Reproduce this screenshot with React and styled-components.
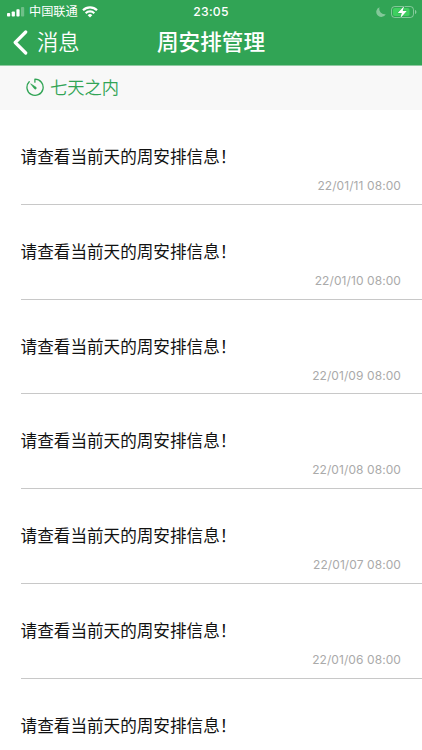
import React from 'react'
import styled, { createGlobalStyle } from 'styled-components';

const messages = [
  { id: 1, text: '请查看当前天的周安排信息！', time: '22/01/11 08:00' },
  { id: 2, text: '请查看当前天的周安排信息！', time: '22/01/10 08:00' },
  { id: 3, text: '请查看当前天的周安排信息！', time: '22/01/09 08:00' },
  { id: 4, text: '请查看当前天的周安排信息！', time: '22/01/08 08:00' },
  { id: 5, text: '请查看当前天的周安排信息！', time: '22/01/07 08:00' },
  { id: 6, text: '请查看当前天的周安排信息！', time: '22/01/06 08:00' },
  { id: 7, text: '请查看当前天的周安排信息！' },
];

const SignalIcon = () => (
  <svg width="18" height="10" viewBox="0 0 18 10" fill="#fff">
    <rect x="0" y="6" width="3.2" height="3.6" rx="0.8" />
    <rect x="4.7" y="4.4" width="3.2" height="5.2" rx="0.8" />
    <rect x="9.4" y="2.3" width="3.2" height="7.3" rx="0.8" />
    <rect x="14" y="0" width="3.2" height="9.6" rx="0.8" opacity="0.3" />
  </svg>
)

const WifiIcon = () => (
  <svg width="16" height="12" viewBox="0 0 16 12" fill="none" stroke="#fff" strokeWidth="2.2">
    <path d="M1 4.3a10 10 0 0 1 14 0" />
    <path d="M3.7 7.2a6.1 6.1 0 0 1 8.6 0" />
    <path d="M8 11.5 5.7 9.2a3.3 3.3 0 0 1 4.6 0z" fill="#fff" stroke="none" />
  </svg>
)

const MoonIcon = () => (
  <svg width="10" height="10" viewBox="0 0 10 10" fill="#fff" opacity="0.4">
    <path d="M3.6.2A5 5 0 1 0 9.8 7 5.2 5.2 0 0 1 3.6.2z" />
  </svg>
)

const BatteryIcon = () => (
  <svg width="26" height="12" viewBox="0 0 26 12">
    <rect x="0.5" y="0.5" width="22" height="11" rx="3.2" fill="none" stroke="#fff" opacity="0.4" />
    <rect x="2" y="2" width="16.5" height="8" rx="1.8" fill="#3fd060" />
    <path d="M24 4v4c.9-.3 1.4-1.1 1.4-2s-.5-1.7-1.4-2z" fill="#fff" opacity="0.45" />
    <path d="M13.2 0 6.7 6.9h4.1L9.4 12l6.4-7h-4.100z" fill="#fff" stroke="#31a455" strokeWidth="0.8" paintOrder="stroke" />
  </svg>
)

const BackIcon = () => (
  <svg width="15" height="25" viewBox="0 0 15 25" fill="none" stroke="#fff" strokeWidth="3.2" strokeLinecap="round" strokeLinejoin="round">
    <path d="M12.7 2 2.2 12.5l10.5 10.5" />
  </svg>
)

const TimerIcon = () => (
  <svg width="18" height="19" viewBox="0 0 18 19" fill="none" stroke="#31a455" strokeWidth="1.3" strokeLinecap="round" strokeLinejoin="round">
    <path d="M8.900 4.200V1.200A8.100 8.100 0 1 1 3.200 3.700" />
    <path d="m5 6 5 3.300a1 1 0 1 1-1.500 1.500z" fill="#31a455" strokeWidth="0.7" />
  </svg>
)

const App = () => {
  return (
    <>
      <GlobalStyle />
      <Screen>
        <Header>
          <StatusBar>
            <Carrier>
              <SignalIcon />
              <span>中国联通</span>
              <WifiIcon />
            </Carrier>
            <Clock>23:05</Clock>
            <Power>
              <MoonIcon />
              <BatteryIcon />
            </Power>
          </StatusBar>
          <NavBar>
            <Back>
              <BackIcon />
              <span>消息</span>
            </Back>
            <Title>周安排管理</Title>
          </NavBar>
        </Header>
        <Filter>
          <TimerIcon />
          <span>七天之内</span>
        </Filter>
        <List>
          {messages.map((message) => {
            const { id, text, time } = message;
            return (
              <Row key={id}>
                <Message>{text}</Message>
                {time && <Time>{time}</Time>}
              </Row>
            )
          })}
        </List>
      </Screen>
    </>
  )
}

const GlobalStyle = createGlobalStyle`
  * {
    box-sizing: border-box;
  }
  body {
    margin: 0;
    background: #fff;
    font-family: Inter, 'Noto Sans CJK SC', sans-serif;
  }
  svg {
    display: block;
    flex: none;
  }
`

const Screen = styled.div`
  display: flex;
  flex-direction: column;
  height: 750px;
  overflow: hidden;
  background: #fff;
`

const Header = styled.header`
  flex: none;
  height: 66px;
  background: #31a455;
  border-bottom: 1px solid #8fc9a1;
  color: #fff;
`

const StatusBar = styled.div`
  display: grid;
  grid-template-columns: 1fr auto 1fr;
  align-items: center;
  height: 22px;
  padding: 0 5px 0 7px;
`

const Carrier = styled.div`
  display: flex;
  align-items: center;
  gap: 4px;
  font-size: 12.2px;
  line-height: 22px;

  span {
    padding-top: 1px;
  }
`

const Clock = styled.div`
  margin-right: 2px;
  font-size: 12.2px;
  font-weight: 500;
  letter-spacing: 0.3px;
  line-height: 22px;
`

const Power = styled.div`
  display: flex;
  align-items: center;
  justify-content: flex-end;
  gap: 5px;
`

const NavBar = styled.div`
  display: grid;
  grid-template-columns: 1fr auto 1fr;
  align-items: center;
  height: 40px;
`

const Back = styled.div`
  display: flex;
  align-items: center;
  gap: 9px;
  padding-left: 13px;
  font-size: 21.3px;
  font-weight: 350;
  line-height: 38px;
`

const Title = styled.h1`
  margin: 0;
  font-size: 21.6px;
  font-weight: 500;
  line-height: 38px;
`

const Filter = styled.div`
  display: flex;
  flex: none;
  align-items: center;
  gap: 6px;
  height: 44px;
  padding: 0 0 1px 26px;
  background: #f8f8f8;
  color: #31a455;
  font-size: 17.3px;
  font-weight: 350;
  line-height: 26px;
`

const List = styled.ul`
  margin: 0;
  padding: 0 0 0 21px;
  list-style: none;
`

const Row = styled.li`
  display: flex;
  flex-direction: column;
  height: 94.8px;
  padding: 35px 21px 0 0;
  border-bottom: 1px solid #c8c8c8;
`

const Message = styled.div`
  margin-left: -0.4px;
  color: #111;
  font-size: 16.6px;
  line-height: 25px;
`

const Time = styled.div`
  margin-top: 6px;
  color: #aaa;
  font-size: 12px;
  letter-spacing: 0.08px;
  line-height: 20px;
  text-align: right;
`

export default App
